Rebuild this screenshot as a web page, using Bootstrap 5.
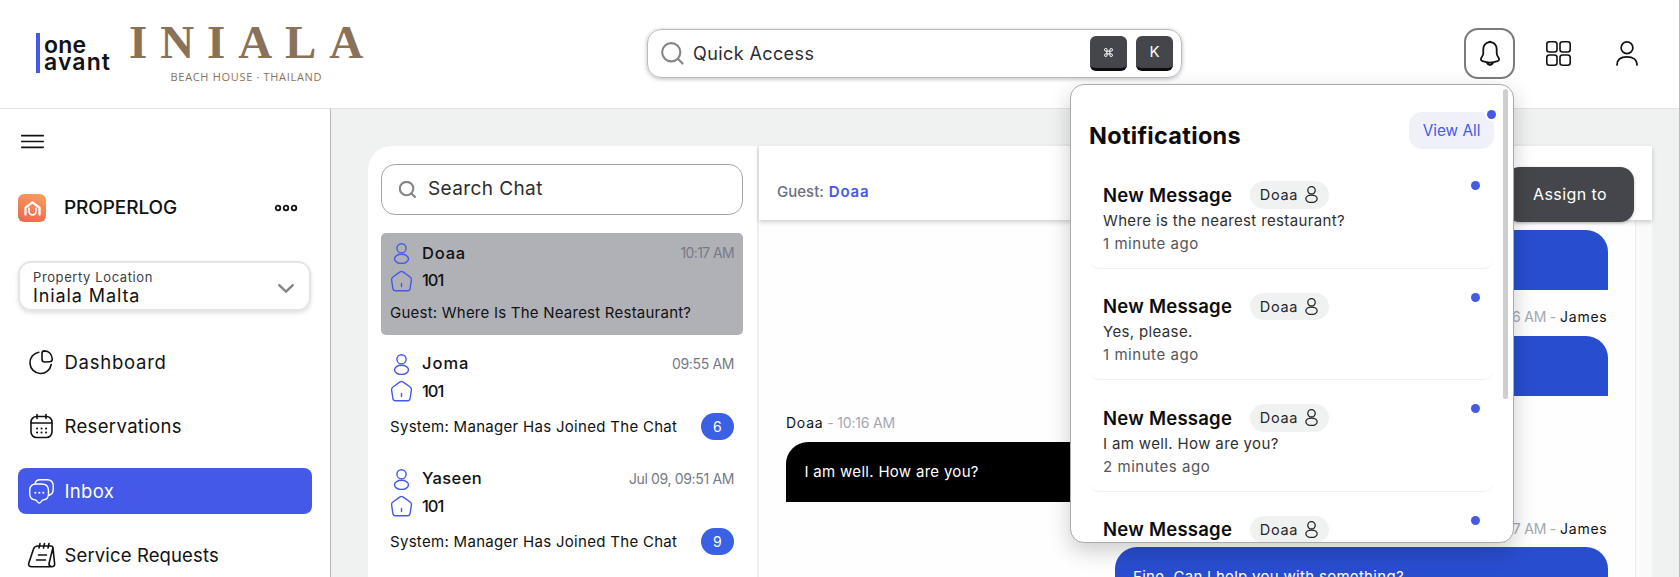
<!DOCTYPE html>
<html lang="en">
<head>
<meta charset="utf-8">
<meta name="viewport" content="width=device-width, initial-scale=1">
<title>Inbox</title>
<link href="https://cdn.jsdelivr.net/npm/bootstrap@5.3.0/dist/css/bootstrap.min.css" rel="stylesheet">
<style>
:root{--ink:#111213;--brand:#4459e8;--bubble:#294dcf;--char:#45464b}
html,body{height:100%}
body{font-family:Inter,"Open Sans",sans-serif;font-size:15px;line-height:1.2;color:var(--ink);background:#fff;overflow:hidden;white-space:nowrap}
svg{display:block;flex:none;fill:none;stroke:currentColor;stroke-linecap:round;stroke-linejoin:round;overflow:visible}
.shell{height:577px;border-right:1px solid #bcbcbe}
.topbar{height:109px;border-bottom:1px solid #e2e2e3}
.brand-one{margin:33px 0 0 36px;height:40px;border-left:4px solid var(--brand);padding:4px 0 0 4px;font-size:23px;font-weight:600;line-height:16.5px;letter-spacing:.2px}
.brand-one span+span{letter-spacing:1.1px}
.hotel{margin:15px 0 0 18px;width:236px;color:#8a7259}
.hotel-name{font:700 47px/54px "Liberation Serif",serif;letter-spacing:12.9px}
.hotel-sub{font:11px/16px "Open Sans",sans-serif;letter-spacing:.68px;padding-left:41.5px}
.quick{margin:29px 0 0 282px;width:535px;height:49px;border:1.5px solid #b9b9c0;border-radius:14px;box-shadow:0 1px 4px rgba(0,0,0,.28);padding:0 8px 0 13px}
.quick-label{font-size:18px;letter-spacing:.4px;color:#2d2d30;margin-left:9px}
.lens-icon{color:#858588}
.keycap{width:37px;height:35px;border-radius:6px;background:var(--char);border-bottom:3px solid #0c0c0d;color:#fff;font-family:inherit;font-size:15px}
.tools{margin:28px 41px 0 0;gap:31px;height:51px}
.bell{width:51px;height:51px;border:2px solid #7b7b7d;border-radius:14px}
.side{width:331px;border-right:1px solid #b4b5b6;padding:0 18px}
.menu-toggle{margin:26px 0 0 3px}
.prop{height:28px;margin-top:46px}
.prop-logo{width:28px;height:28px;border-radius:6px;background:linear-gradient(200deg,#f7a15e,#ee6350);color:#fff}
.prop-name{font-size:19px;font-weight:500;letter-spacing:-.1px;margin-left:18px}
.place{margin-top:39px;height:50px;border:2px solid #e4e4e4;border-radius:13px;box-shadow:0 2px 4px rgba(0,0,0,.13);padding:6px 15px 0 13px;width:293px}
.place-label{font-size:13px;line-height:16px;letter-spacing:.6px;color:#3c3c3f}
.place-value{font-size:18px;line-height:22px;letter-spacing:.9px}
.place svg{color:#858588}
.side .nav{margin-top:28px;gap:18.4px}
.side .nav-link{height:46px;width:294px;border-radius:8px;padding:0 0 0 11px;color:var(--ink);font-size:18.5px;gap:11.5px;letter-spacing:.35px}
.side .nav-link.active{background:var(--brand);color:#fff}
.side .nav-link:first-child{letter-spacing:.75px}
.side .nav-link:last-child{letter-spacing:.13px}
.stage{background:#f0f2f1;padding:37px 27px 0 37px}
.chats{width:390px;background:#fff;border-top-left-radius:24px;border-right:1px solid #ececec;padding:18px 14px 0 13px}
.chat-search{height:51px;border:1.2px solid #a4a4a6;border-radius:14px;padding-left:17px;margin-bottom:18px;gap:12px;font-size:19px;letter-spacing:.4px;color:#2d2d30}
.chat-item{height:106px;padding:7px 9px 0;border-radius:5px;margin-bottom:9px}
.chat-item.on{height:101.5px;background:#b0b1b7}
.who{height:27.3px;gap:9px;font-size:16.5px;font-weight:500}
.who svg{color:var(--brand);width:23px}
.who .when{font-size:14px;font-weight:400;color:#757a88;letter-spacing:-.35px}
.on .when{letter-spacing:-.6px}
.room{letter-spacing:-1px}
.last{font-size:15px;letter-spacing:.3px;margin-top:8px;height:27px}
.on .last{margin-top:5px;letter-spacing:.23px}
.count{width:33px;height:27.5px;border-radius:14px;background:#3a61e3;color:#fff;font-size:14px;font-weight:400}
.thread{margin-left:1px;width:893px}
.thread-head{height:73.5px;background:#fff;box-shadow:0 2px 5px rgba(0,0,0,.2);padding:21px 18px 0 18px;z-index:1;font-weight:500;color:#6b7080}
.thread-head b{font-weight:600;color:var(--brand);letter-spacing:.8px;margin-left:1px}
.assign{width:128px;height:55px;border-radius:14px;background:var(--char);color:#fff;font-size:16px;font-weight:400;letter-spacing:.4px;box-shadow:0 1px 3px rgba(0,0,0,.25)}
.thread-body{width:877px;background:#fefefe;border-right:1px solid #ececec;padding:10.5px 27.5px 0 27px}
.track{width:15.5px;background:#fafafa}
.bubble{width:493px;height:60px;flex:none;background:var(--bubble);border-top-right-radius:22px;border-top-left-radius:22px;color:#fff;padding:0 18.5px;letter-spacing:.3px}
.bubble.guest{background:#000}
.meta{height:45.8px;flex:none;padding-top:9px;font-size:14px;letter-spacing:-.2px;color:#a3a7b3}
.meta span{color:var(--ink);letter-spacing:.75px}
.pop{position:absolute;left:1070px;top:84px;width:444px;height:459px;background:#fff;border:1px solid #a9aaae;border-radius:14px;box-shadow:0 8px 22px rgba(0,0,0,.2);z-index:5;overflow:hidden;padding:27px 0 0 18px}
.pop-head{height:45px;width:405px}
.pop-title{font-size:23.5px;font-weight:700;letter-spacing:.3px;padding-top:9.500px;color:#0c0c0d}
.view-all{width:85px;height:37px;border-radius:13px;background:#f0f1f8;color:var(--brand);font-size:15.3px;padding-top:1px}
.dot{width:9px;height:9px;border-radius:50%;background:var(--brand)}
.view-all .dot{position:absolute;right:-2px;top:-2.5px;box-shadow:0 0 0 2px #fff}
.thumb{position:absolute;right:5.5px;top:4px;width:4.5px;height:310px;border-radius:3px;background:#cecece}
.note{width:405px;height:111.5px;padding:24px 14px 0;border-bottom:1px solid #f0f0f1;border-radius:10px}
.note-title{font-size:18.5px;font-weight:600;letter-spacing:.25px;width:146.5px;color:#0c0c0d}
.tag{height:27.5px;width:79px;border-radius:14px;background:#f0f2f1;font-size:14.5px;letter-spacing:.7px;color:#27272a;gap:7px}
.note-text{line-height:23px;letter-spacing:.36px;color:#2f2f33}
.note-time{line-height:23px;letter-spacing:.55px;color:#55565b}
</style>
</head>
<body>
<svg width="0" height="0" class="position-absolute">
  <symbol id="person" viewBox="0 0 16 21"><circle cx="8" cy="5.3" r="4.6"/><ellipse cx="8" cy="15.8" rx="7" ry="4.6"/></symbol>
  <symbol id="house" viewBox="0 0 22 22"><path d="M9.6 1.9 2.4 7Q.9 8 1.1 9.800L2.400 18.500Q2.700 20.800 5 20.800H17Q19.300 20.800 19.600 18.500L20.900 9.800Q21.100 8 19.600 7L12.400 1.900Q11 .9 9.600 1.900ZM11 13.500V16.500"/></symbol>
  <symbol id="lens" viewBox="0 0 24 24"><circle cx="10.700" cy="10.700" r="9.500"/><path d="m17.500 17.500 5 5"/></symbol>
</svg>
<div class="shell d-flex flex-column position-relative">
  <header class="topbar d-flex align-items-start flex-shrink-0">
    <div class="brand-one d-flex flex-column"><span>one</span><span>avant</span></div>
    <div class="hotel"><div class="hotel-name">INIALA</div><div class="hotel-sub">BEACH HOUSE · THAILAND</div></div>
    <div class="quick d-flex align-items-center">
      <svg class="lens-icon" width="23" height="23" stroke-width="2.200"><use href="#lens"/></svg>
      <span class="quick-label">Quick Access</span>
      <kbd class="keycap d-flex align-items-center justify-content-center ms-auto p-0"><svg width="9" height="9" viewBox="0 0 10 10" stroke-width="1.100"><path d="M3.500 3.500H6.500V6.500H3.500ZM3.500 3.500V2A1.500 1.500 0 1 0 2 3.500ZM6.500 3.500H8A1.500 1.500 0 1 0 6.500 2ZM6.500 6.500V8A1.500 1.500 0 1 0 8 6.500ZM3.500 6.500H2A1.500 1.500 0 1 0 3.500 8Z"/></svg></kbd>
      <kbd class="keycap d-flex align-items-center justify-content-center p-0" style="margin-left:9px">K</kbd>
    </div>
    <div class="tools d-flex align-items-center ms-auto">
      <div class="bell d-flex align-items-center justify-content-center">
        <svg width="20" height="25" viewBox="0 0 20 25" stroke-width="1.800"><path d="M10 1.200C6 1.200 3.300 4.200 3.300 8V12Q3.300 14.200 2 15.800C.2 18 .8 19.500 2.500 20.200C7 21.800 13 21.800 17.500 20.200C19.200 19.500 19.800 18 18 15.800Q16.700 14.200 16.700 12V8C16.700 4.200 14 1.200 10 1.200ZM6.800 21.500Q8 24 10 24T13.200 21.500M8.500 1.200Q10 .3 11.500 1.200"/></svg>
      </div>
      <svg width="25" height="25" viewBox="0 0 25 25" stroke-width="1.600"><rect x=".8" y=".8" width="10.200" height="10.200" rx="2.500"/><rect x="14" y=".8" width="10.200" height="10.200" rx="2.500"/><rect x=".8" y="14" width="10.200" height="10.200" rx="2.500"/><rect x="14" y="14" width="10.200" height="10.200" rx="2.500"/></svg>
      <svg width="22" height="25" viewBox="0 0 22 25" stroke-width="1.700" style="margin-left:14px"><circle cx="11" cy="6.700" r="5.900"/><path d="M1 24C1 18.500 5 15.800 11 15.800S21 18.500 21 24"/></svg>
    </div>
  </header>

  <div class="d-flex flex-grow-1 overflow-hidden">
    <aside class="side flex-shrink-0">
      <svg class="menu-toggle" width="23" height="13" viewBox="0 0 23 13" stroke-width="1.700"><path d="M.8.700H22.200M.8 6.500H22.200M.8 12.300H22.200"/></svg>
      <div class="prop d-flex align-items-center">
        <div class="prop-logo d-flex align-items-center justify-content-center"><svg width="17" height="15" viewBox="0 0 18 16" stroke-width="2.400"><path d="M1.500 14.500V7L9 1.500 16.500 7V14.500"/><path d="M5.200 7.500V11A3.800 3.800 0 0 0 12.800 11V7.500" stroke-width="1.700"/></svg></div>
        <span class="prop-name">PROPERLOG</span>
        <svg class="ms-auto" style="margin-right:15px" width="22" height="8" viewBox="0 0 22 8" stroke-width="1.800"><circle cx="3" cy="4" r="2.300"/><circle cx="11" cy="4" r="2.300"/><circle cx="19" cy="4" r="2.300"/></svg>
      </div>
      <div class="place d-flex justify-content-between">
        <div><div class="place-label">Property Location</div><div class="place-value">Iniala Malta</div></div>
        <svg width="16" height="9" viewBox="0 0 16 9" stroke-width="2.400" style="margin-top:15px"><path d="m1.200 1.200 6.800 6.500 6.800-6.500"/></svg>
      </div>
      <nav class="nav flex-column flex-nowrap">
        <a class="nav-link d-flex align-items-center"><svg width="24" height="24" viewBox="0 0 24 24" stroke-width="1.600"><path d="M9.800 2.200A10.700 10.700 0 1 0 22.200 14.500M13 3.500Q13 .9 15.400.9C20 1.200 23 4.500 23.300 9Q23.400 11.500 20.800 11.700L16 12Q13.200 12.200 13 9.500Z"/></svg><span>Dashboard</span></a>
        <a class="nav-link d-flex align-items-center"><svg width="24" height="24" viewBox="0 0 24 24" stroke-width="1.600"><rect x="2" y="2.500" width="21" height="21" rx="5.500"/><path d="M2 9H23M8 .5V4.500M17 .5V4.500"/><path d="M8 14.500h.1M12.500 14.500h.1M17 14.500h.1M8 18.500h.1M12.500 18.500h.1M17 18.500h.1" stroke-width="2"/></svg><span>Reservations</span></a>
        <a class="nav-link active d-flex align-items-center"><svg width="24" height="24" viewBox="0 0 24 24" stroke-width="1.400"><path d="M6 5Q6.500.8 11 .8H18Q24.200.8 24.200 7V10Q24.200 15.500 19.500 16.500M7 5H12.500Q19.500 5 19.500 11.500V14.500Q19.500 20.500 14 21Q12.800 21.200 12 22.800 10.200 25.200 8.500 22.800 7.500 21.200 6.500 21 .7 20.500.7 14.500V11.500Q.7 5 7 5Z"/><path d="M6.300 13.800h.1M10.300 13.800h.1M14.300 13.800h.1" stroke-width="2"/></svg><span>Inbox</span></a>
        <a class="nav-link d-flex align-items-center"><svg width="24" height="24" viewBox="0 0 24 24" stroke-width="1.600"><path d="M9 3H22Q24 3 24 5.200L25.600 20.500Q26 23.700 22.500 23.700H3Q-1 23.700-.3 20.500L4.500 6Q5.500 3 9 3ZM24 4.500 20 20.500Q19.800 23.200 22.500 23.700M11 .5 10 5M15.500.5 14.500 5M20 .5 19 5M9.500 12H17.500M7.500 17H16.500"/></svg><span>Service Requests</span></a>
      </nav>
    </aside>

    <main class="stage d-flex flex-grow-1">
      <section class="chats flex-shrink-0">
        <div class="chat-search d-flex align-items-center"><svg class="lens-icon" width="17" height="17" stroke-width="3"><use href="#lens"/></svg>Search Chat</div>
        <div class="chat-item on">
          <div class="who d-flex align-items-center"><svg width="16" height="21" stroke-width="1.400"><use href="#person"/></svg><span style="letter-spacing:.8px">Doaa</span><span class="when ms-auto">10:17 AM</span></div>
          <div class="who room d-flex align-items-center"><svg width="22" height="22" stroke-width="1.400"><use href="#house"/></svg>101</div>
          <div class="last d-flex align-items-center">Guest: Where Is The Nearest Restaurant?</div>
        </div>
        <div class="chat-item">
          <div class="who d-flex align-items-center"><svg width="16" height="21" stroke-width="1.400"><use href="#person"/></svg><span style="letter-spacing:1px">Joma</span><span class="when ms-auto">09:55 AM</span></div>
          <div class="who room d-flex align-items-center"><svg width="22" height="22" stroke-width="1.400"><use href="#house"/></svg>101</div>
          <div class="last d-flex align-items-center justify-content-between">System: Manager Has Joined The Chat<span class="badge count d-flex align-items-center justify-content-center">6</span></div>
        </div>
        <div class="chat-item">
          <div class="who d-flex align-items-center"><svg width="16" height="21" stroke-width="1.400"><use href="#person"/></svg><span style="letter-spacing:.4px">Yaseen</span><span class="when ms-auto">Jul 09, 09:51 AM</span></div>
          <div class="who room d-flex align-items-center"><svg width="22" height="22" stroke-width="1.400"><use href="#house"/></svg>101</div>
          <div class="last d-flex align-items-center justify-content-between">System: Manager Has Joined The Chat<span class="badge count d-flex align-items-center justify-content-center">9</span></div>
        </div>
      </section>

      <section class="thread d-flex flex-column">
        <div class="thread-head d-flex justify-content-between flex-shrink-0">
          <div style="margin-top:16px">Guest: <b>Doaa</b></div>
          <div class="assign d-flex align-items-center justify-content-center flex-shrink-0">Assign to</div>
        </div>
        <div class="d-flex flex-grow-1 overflow-hidden">
          <div class="thread-body d-flex flex-column">
            <div class="bubble align-self-end"></div>
            <div class="meta d-flex align-items-center align-self-end gap-1">10:16 AM - <span>James</span></div>
            <div class="bubble align-self-end"></div>
            <div class="meta d-flex align-items-center gap-1"><span>Doaa</span> - 10:16 AM</div>
            <div class="bubble guest d-flex align-items-center">I am well. How are you?</div>
            <div class="meta d-flex align-items-center align-self-end gap-1">10:17 AM - <span>James</span></div>
            <div class="bubble align-self-end d-flex align-items-center">Fine. Can I help you with something?</div>
          </div>
          <div class="track"></div>
        </div>
      </section>
    </main>
  </div>

  <div class="pop">
    <div class="pop-head d-flex justify-content-between align-items-start">
      <div class="pop-title">Notifications</div>
      <div class="view-all position-relative d-flex align-items-center justify-content-center">View All<span class="dot"></span></div>
    </div>
    <div class="note"><div class="d-flex align-items-center"><span class="note-title">New Message</span><span class="tag d-flex align-items-center justify-content-center">Doaa<svg width="13" height="17" stroke-width="1.600"><use href="#person"/></svg></span><span class="dot ms-auto align-self-start"></span></div><div class="note-text">Where is the nearest restaurant?</div><div class="note-time">1 minute ago</div></div>
    <div class="note"><div class="d-flex align-items-center"><span class="note-title">New Message</span><span class="tag d-flex align-items-center justify-content-center">Doaa<svg width="13" height="17" stroke-width="1.600"><use href="#person"/></svg></span><span class="dot ms-auto align-self-start"></span></div><div class="note-text">Yes, please.</div><div class="note-time">1 minute ago</div></div>
    <div class="note"><div class="d-flex align-items-center"><span class="note-title">New Message</span><span class="tag d-flex align-items-center justify-content-center">Doaa<svg width="13" height="17" stroke-width="1.600"><use href="#person"/></svg></span><span class="dot ms-auto align-self-start"></span></div><div class="note-text">I am well. How are you?</div><div class="note-time">2 minutes ago</div></div>
    <div class="note"><div class="d-flex align-items-center"><span class="note-title">New Message</span><span class="tag d-flex align-items-center justify-content-center">Doaa<svg width="13" height="17" stroke-width="1.600"><use href="#person"/></svg></span><span class="dot ms-auto align-self-start"></span></div></div>
    <div class="thumb"></div>
  </div>
</div>
<script src="https://cdn.jsdelivr.net/npm/bootstrap@5.3.0/dist/js/bootstrap.bundle.min.js"></script>
</body>
</html>
